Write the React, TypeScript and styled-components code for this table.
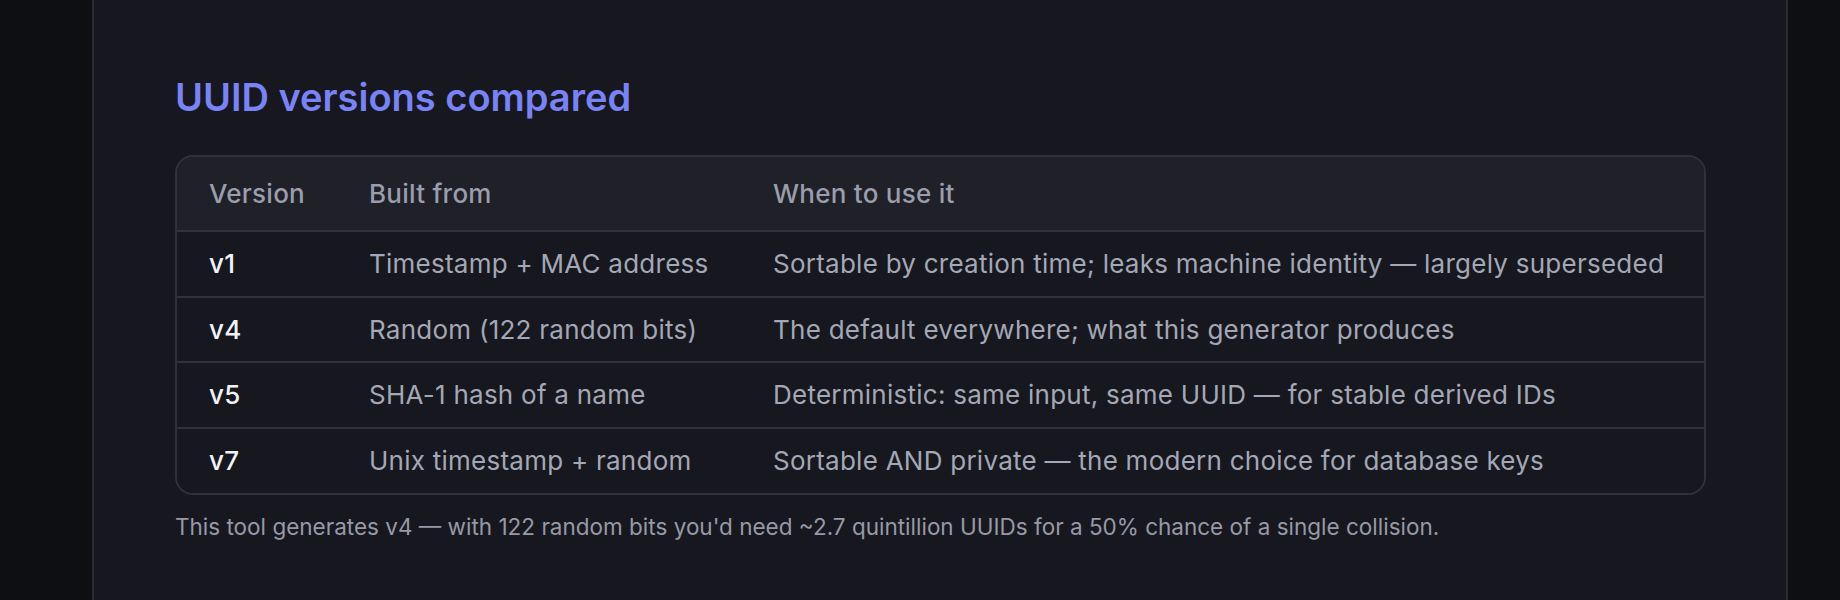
import React from "react";
import styled, { createGlobalStyle } from "styled-components";

const GlobalStyle = createGlobalStyle`
  html, body {
    margin: 0;
    padding: 0;
    background: #0e0f12;
  }
  body {
    font-family: Inter, "Noto Sans", sans-serif;
    -webkit-font-smoothing: antialiased;
  }
`;

const Page = styled.div`
  display: flex;
  min-height: 600px;
  padding-left: 92px;
  background: #0e0f12;
`;

const Panel = styled.main`
  width: 1696px;
  min-height: 600px;
  box-sizing: border-box;
  background: #17181f;
  border-left: 2px solid #2b2c32;
  border-right: 2px solid #2b2c32;
  padding: 74px 80px 40px 81px;
`;

const Title = styled.h2`
  margin: 0 0 35px;
  font-size: 38px;
  line-height: 46px;
  font-weight: 600;
  color: #7a83f6;
`;

const TableWrap = styled.div`
  border: 2px solid #303139;
  border-radius: 18px;
  overflow: hidden;
`;

const Table = styled.table`
  width: 100%;
  border-collapse: collapse;
  table-layout: fixed;
  font-size: 26px;
  line-height: 36px;
  letter-spacing: 0.25px;
`;

const HeadCell = styled.th<{ $width?: number }>`
  box-sizing: border-box;
  width: ${(p) => (p.$width ? `${p.$width}px` : "auto")};
  padding: 19px 32px 18px;
  text-align: left;
  font-weight: 500;
  color: #9a9dab;
  background: #1f2028;
  border-bottom: 2px solid #303139;
`;

const Row = styled.tr`
  &:not(:last-child) td {
    border-bottom: 2px solid #303139;
  }
`;

const Cell = styled.td<{ $strong?: boolean }>`
  padding: 14px 32px 13.7px;
  white-space: nowrap;
  font-weight: ${(p) => (p.$strong ? 500 : 400)};
  color: ${(p) => (p.$strong ? "#f1f2f6" : "#a4a7b5")};
  background: #17181f;
`;

const Note = styled.p`
  margin: 15px 0 0;
  font-size: 22.5px;
  line-height: 34px;
  color: #9799a6;
`;

const versions = [
  {
    id: "v1",
    source: "Timestamp + MAC address",
    use: "Sortable by creation time; leaks machine identity — largely superseded",
  },
  {
    id: "v4",
    source: "Random (122 random bits)",
    use: "The default everywhere; what this generator produces",
  },
  {
    id: "v5",
    source: "SHA-1 hash of a name",
    use: "Deterministic: same input, same UUID — for stable derived IDs",
  },
  {
    id: "v7",
    source: "Unix timestamp + random",
    use: "Sortable AND private — the modern choice for database keys",
  },
];

const App: React.FC = () => {
  return (
    <Page>
      <GlobalStyle />
      <Panel>
        <Title>UUID versions compared</Title>
        <TableWrap>
          <Table>
            <thead>
              <tr>
                <HeadCell $width={160}>Version</HeadCell>
                <HeadCell $width={404}>Built from</HeadCell>
                <HeadCell>When to use it</HeadCell>
              </tr>
            </thead>
            <tbody>
              {versions.map((v) => (
                <Row key={v.id}>
                  <Cell $strong>{v.id}</Cell>
                  <Cell>{v.source}</Cell>
                  <Cell>{v.use}</Cell>
                </Row>
              ))}
            </tbody>
          </Table>
        </TableWrap>
        <Note>
          This tool generates v4 — with 122 random bits you'd need ~2.7 quintillion UUIDs for a 50%
          chance of a single collision.
        </Note>
      </Panel>
    </Page>
  );
};

export default App;
